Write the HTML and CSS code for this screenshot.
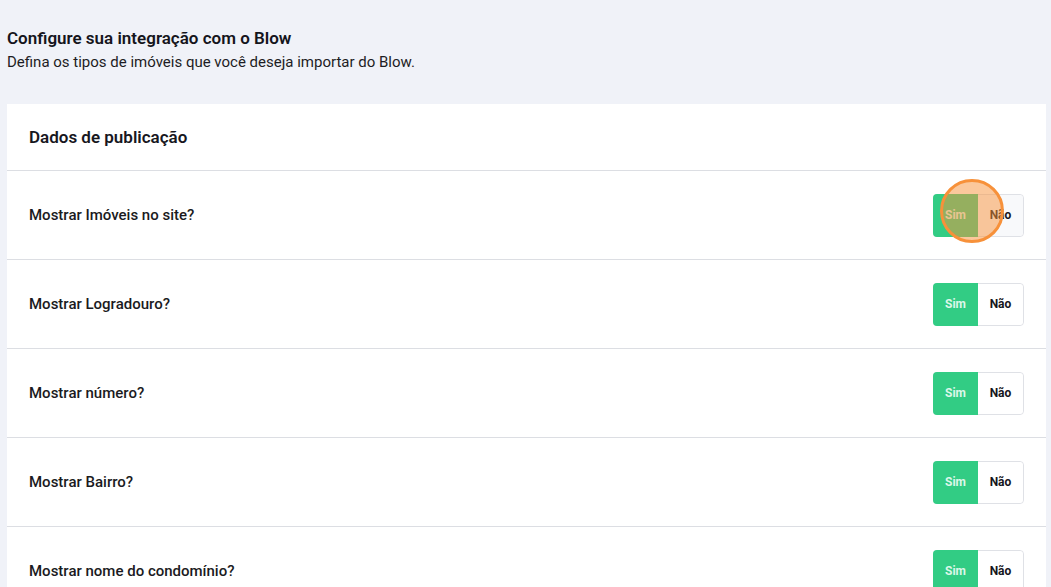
FILE: index.html
```html
<!DOCTYPE html>
<html lang="pt-BR">
<head>
<meta charset="utf-8">
<title>Configure sua integração com o Blow</title>
<link rel="stylesheet" href="styles.css">
</head>
<body>
<div class="page">
  <header class="intro">
    <h1 class="title">Configure sua integração com o Blow</h1>
    <p class="subtitle">Defina os tipos de imóveis que você deseja importar do Blow.</p>
  </header>
  <section class="card">
    <div class="card-head">Dados de publicação</div>
    <div class="row">
      <span class="label">Mostrar Imóveis no site?</span>
      <div class="toggle toggle-clicked">
        <span class="opt opt-yes">Sim</span><span class="opt opt-no">Não</span>
        <span class="click-marker"></span>
      </div>
    </div>
    <div class="row">
      <span class="label">Mostrar Logradouro?</span>
      <div class="toggle"><span class="opt opt-yes">Sim</span><span class="opt opt-no">Não</span></div>
    </div>
    <div class="row">
      <span class="label">Mostrar número?</span>
      <div class="toggle"><span class="opt opt-yes">Sim</span><span class="opt opt-no">Não</span></div>
    </div>
    <div class="row">
      <span class="label">Mostrar Bairro?</span>
      <div class="toggle"><span class="opt opt-yes">Sim</span><span class="opt opt-no">Não</span></div>
    </div>
    <div class="row">
      <span class="label">Mostrar nome do condomínio?</span>
      <div class="toggle"><span class="opt opt-yes">Sim</span><span class="opt opt-no">Não</span></div>
    </div>
  </section>
</div>
</body>
</html>
```

FILE: styles.css
```css
html, body {
  margin: 0;
  padding: 0;
  background: #f0f2f8;
  font-family: Roboto, "Noto Sans", sans-serif;
  color: #16161d;
  overflow: hidden;
}

.page {
  padding: 28px 5px 0 7px;
}

.intro {
  padding: 0;
}

.title {
  margin: 0;
  font-size: 17px;
  font-weight: 600;
  line-height: 21px;
  color: #15151c;
}

.subtitle {
  margin: 4px 0 0;
  font-size: 15px;
  font-weight: 400;
  line-height: 18px;
  color: #1d1d24;
}

.card {
  margin-top: 33px;
  background: #ffffff;
}

.card-head {
  height: 66px;
  display: flex;
  align-items: center;
  padding: 0 22px;
  font-size: 17px;
  font-weight: 600;
  color: #17171e;
}

.row {
  height: 88px;
  border-top: 1px solid #dcdee3;
  display: flex;
  align-items: center;
  justify-content: space-between;
  padding: 0 22px;
}

.label {
  font-size: 15px;
  font-weight: 500;
  color: #1a1a21;
}

.toggle {
  position: relative;
  display: flex;
  height: 43px;
  width: 91px;
  border-radius: 4px;
  border: 1px solid #dfe1e6;
  box-sizing: border-box;
  overflow: visible;
}

.opt {
  flex: 1;
  display: flex;
  align-items: center;
  justify-content: center;
  font-size: 12px;
  font-weight: 700;
}

.opt-yes {
  background: #32cc84;
  color: #dcf7e9;
  border-radius: 4px 0 0 4px;
  margin: -1px 0 -1px -1px;
}

.opt-no {
  background: #ffffff;
  color: #16161d;
  border-radius: 0 4px 4px 0;
}

.toggle-clicked .opt-no {
  background: #f8f9fb;
}

.click-marker {
  position: absolute;
  left: 6px;
  top: -16px;
  width: 64px;
  height: 64px;
  box-sizing: border-box;
  border-radius: 50%;
  border: 3px solid #f7913a;
  background: rgba(247, 145, 58, 0.5);
}
```
